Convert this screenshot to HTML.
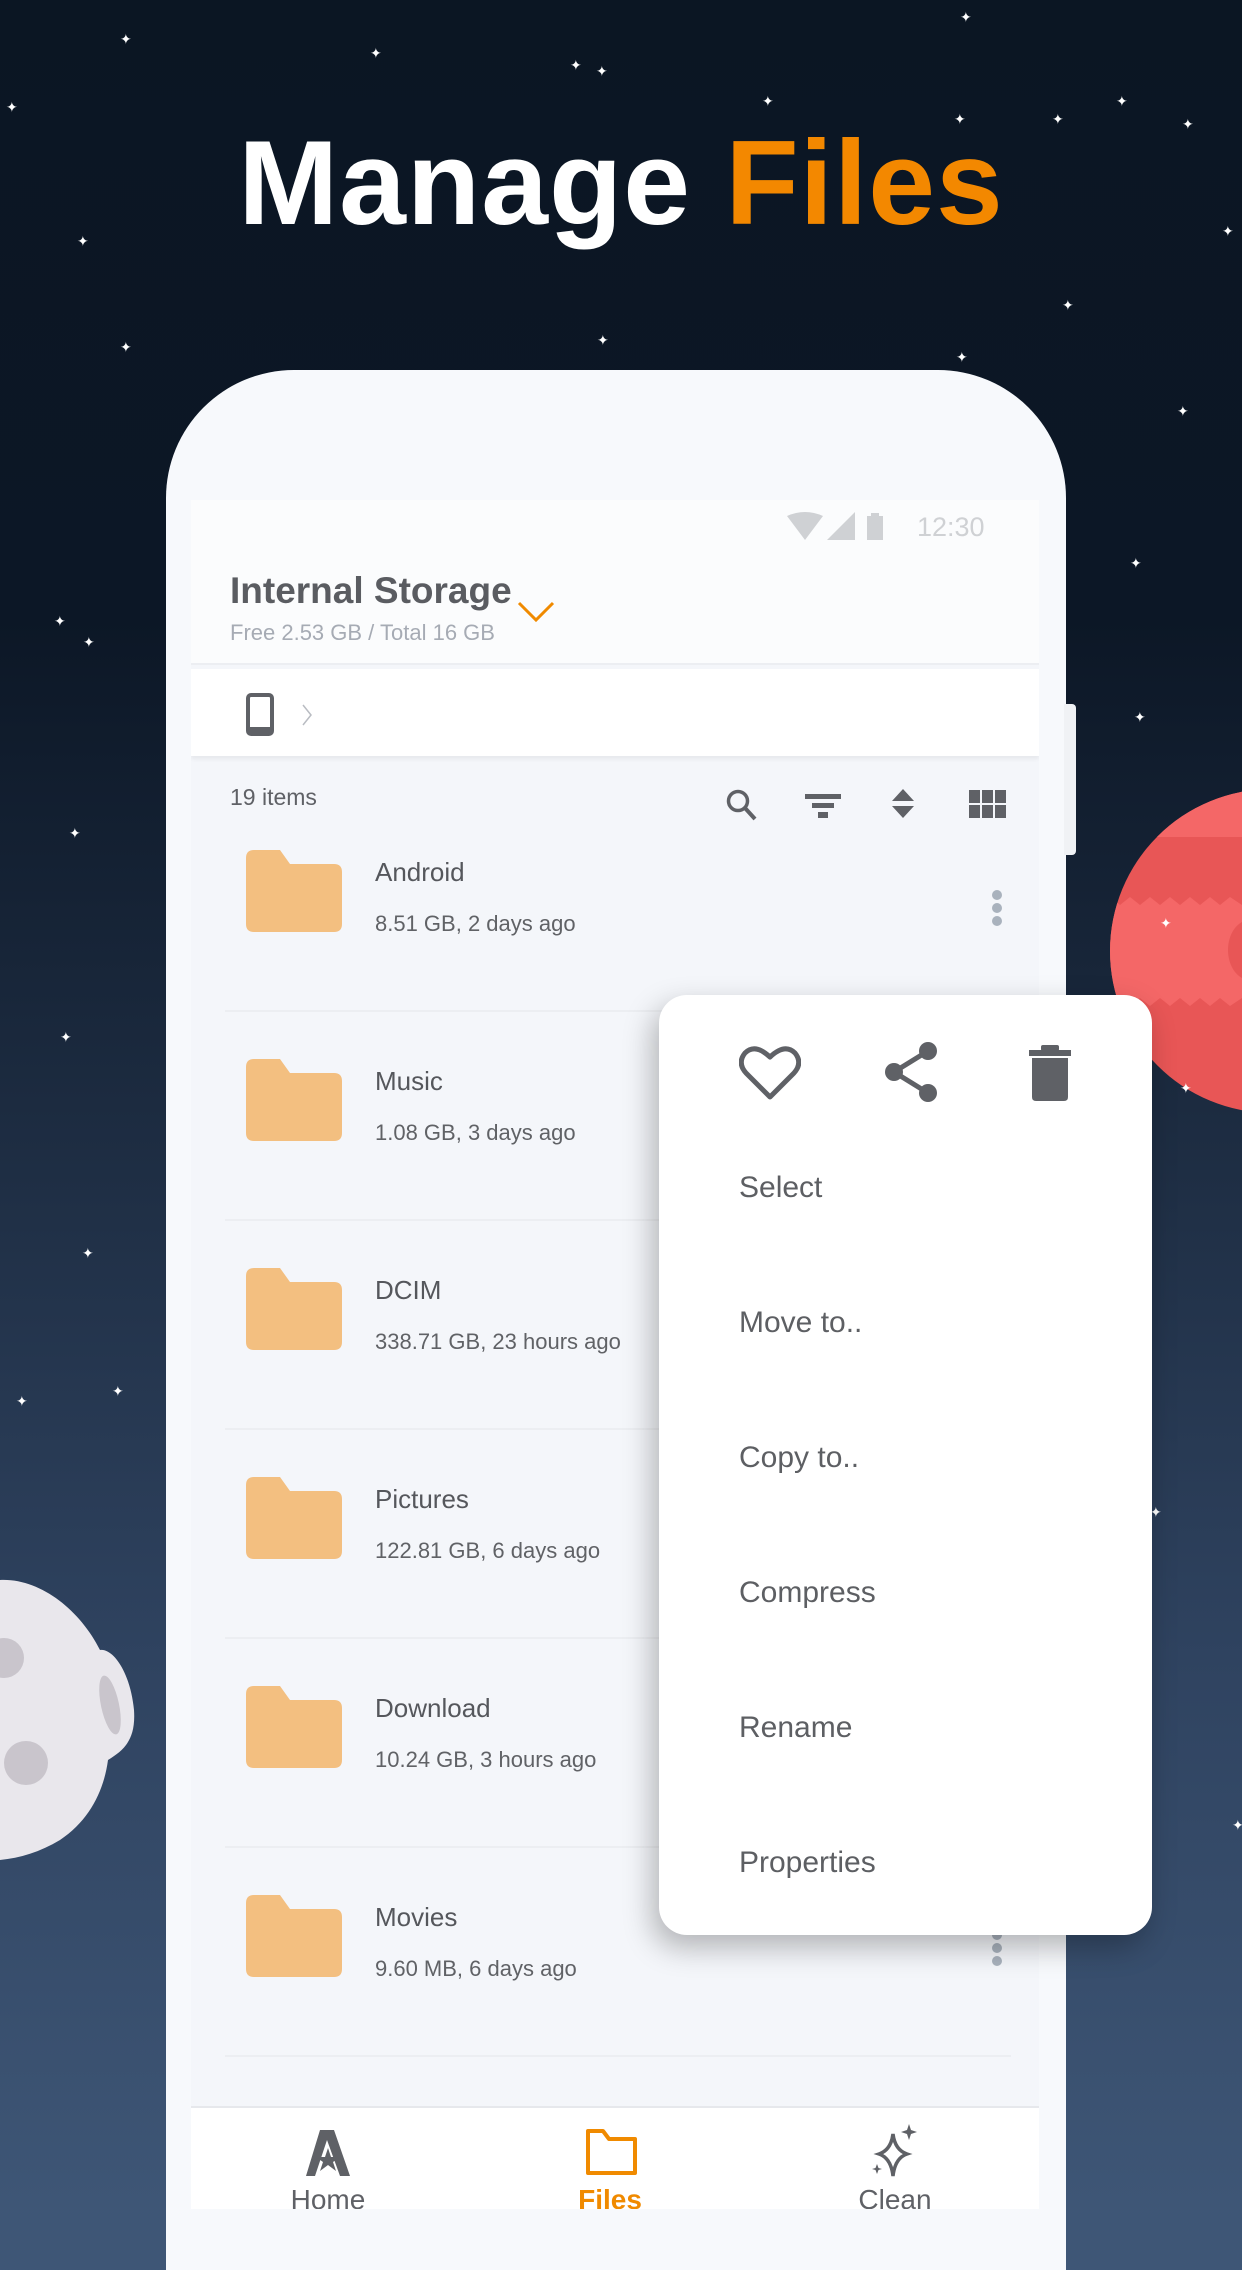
<!DOCTYPE html>
<html style="background:#3e5676"><head><meta charset="utf-8"><style>
*{margin:0;padding:0;box-sizing:border-box}
body{width:1242px;height:2209px;overflow:hidden;position:relative;font-family:"Liberation Sans",sans-serif;
background:linear-gradient(180deg,#0b1623 0%,#0c1726 28%,#1c2b40 50%,#2f4360 75%,#3e5676 100%);}
.star{position:absolute;color:#fff;font-size:14px;line-height:1}
.title{position:absolute;top:114px;left:0;width:1242px;text-align:center;font-weight:bold;font-size:120px;color:#fff;letter-spacing:1px}
.title span{color:#f38800}
.phone{position:absolute;left:166px;top:370px;width:900px;height:1900px;background:#f7f9fc;border-radius:128px 128px 0 0}
.btn{position:absolute;left:1064px;top:704px;width:12px;height:151px;background:#f0f2f5;border-radius:0 4px 4px 0}
.screen{position:absolute;left:191px;top:500px;width:848px;height:1709px;background:#f4f6fa;overflow:hidden}
.hdr{position:absolute;left:0;top:0;width:848px;height:165px;background:#fbfcfd;border-bottom:2px solid #eceef2}
.crumb{position:absolute;left:0;top:169px;width:848px;height:87px;background:#fff;box-shadow:0 3px 4px rgba(0,0,0,.06)}
.row{position:absolute;left:0;width:848px;height:209px}
.row .f{position:absolute;left:55px;top:47px}
.row .n{position:absolute;left:184px;top:54px;font-size:26px;color:#55575c}
.row .m{position:absolute;left:184px;top:108px;font-size:22px;color:#606266}
.row .sep{position:absolute;left:34px;right:28px;bottom:0;height:2px;background:#eceef2}
.dots{position:absolute;left:801px;width:10px}
.dots i{display:block;width:10px;height:10px;border-radius:5px;background:#a9b2bd;margin-bottom:3px}
.nav{position:absolute;left:0;top:1606px;width:848px;height:110px;background:#fff;border-top:2px solid #e6e8ec}
.nav div{position:absolute;top:76px;font-size:28px;width:160px;text-align:center;color:#5f6166}
.pop{position:absolute;left:659px;top:995px;width:493px;height:940px;background:#fff;border-radius:28px;box-shadow:-6px 12px 30px rgba(0,0,0,.28)}
.pop .it{position:absolute;left:80px;font-size:30px;color:#5d5f63}
</style></head><body>
<div class="star" style="left:120px;top:32px">✦</div>
<div class="star" style="left:6px;top:100px">✦</div>
<div class="star" style="left:370px;top:46px">✦</div>
<div class="star" style="left:570px;top:58px">✦</div>
<div class="star" style="left:596px;top:64px">✦</div>
<div class="star" style="left:762px;top:94px">✦</div>
<div class="star" style="left:960px;top:10px">✦</div>
<div class="star" style="left:1116px;top:94px">✦</div>
<div class="star" style="left:1052px;top:112px">✦</div>
<div class="star" style="left:954px;top:112px">✦</div>
<div class="star" style="left:1182px;top:117px">✦</div>
<div class="star" style="left:1222px;top:224px">✦</div>
<div class="star" style="left:77px;top:234px">✦</div>
<div class="star" style="left:1062px;top:298px">✦</div>
<div class="star" style="left:120px;top:340px">✦</div>
<div class="star" style="left:597px;top:333px">✦</div>
<div class="star" style="left:956px;top:350px">✦</div>
<div class="star" style="left:1177px;top:404px">✦</div>
<div class="star" style="left:54px;top:614px">✦</div>
<div class="star" style="left:83px;top:635px">✦</div>
<div class="star" style="left:1130px;top:556px">✦</div>
<div class="star" style="left:1134px;top:710px">✦</div>
<div class="star" style="left:69px;top:826px">✦</div>
<div class="star" style="left:60px;top:1030px">✦</div>
<div class="star" style="left:82px;top:1246px">✦</div>
<div class="star" style="left:16px;top:1394px">✦</div>
<div class="star" style="left:112px;top:1384px">✦</div>
<div class="star" style="left:1150px;top:1505px">✦</div>
<div class="star" style="left:1232px;top:1818px">✦</div>

<div class="title">Manage <span>Files</span></div>

<svg style="position:absolute;left:1100px;top:785px" width="142" height="335" viewBox="0 0 142 335">
<defs><clipPath id="pc"><circle cx="172" cy="166" r="162"/></clipPath></defs>
<g clip-path="url(#pc)">
<rect x="0" y="0" width="142" height="335" fill="#e85656"/>
<path d="M0 0H142V52H0Z" fill="#f46767"/>
<path d="M0 120 L10 112 L20 120 L30 112 L40 120 L50 112 L60 120 L70 112 L80 120 L90 112 L100 120 L110 112 L120 120 L130 112 L142 120 V213 L130 221 L120 213 L110 221 L100 213 L90 221 L80 213 L70 221 L60 213 L50 221 L40 213 L30 221 L20 213 L10 221 L0 213Z" fill="#f46767"/>
<ellipse cx="150" cy="165" rx="22" ry="30" fill="#e85656"/>
</g>
<text x="60" y="143" fill="#fff" font-size="14">✦</text>
<text x="80" y="308" fill="#fff" font-size="14">✦</text>
</svg>

<svg style="position:absolute;left:0;top:1570px" width="140" height="290" viewBox="0 0 140 290">
<path d="M0 10 C40 8 80 40 100 80 C112 78 130 100 134 140 C136 170 124 180 108 190 C104 220 90 250 60 270 C40 282 20 288 0 290Z" fill="#e9e7ec"/>
<circle cx="4" cy="88" r="20" fill="#c9c5cc"/>
<circle cx="26" cy="193" r="22" fill="#c9c5cc"/>
<ellipse cx="110" cy="135" rx="9" ry="30" fill="#c9c5cc" transform="rotate(-12 110 135)"/>
</svg>

<div class="phone"></div>
<div class="btn"></div>
<div class="screen">
 <div class="hdr">
  <svg style="position:absolute;left:596px;top:12px" width="100" height="30" viewBox="0 0 100 30">
   <path d="M0 4 Q18 -4 36 4 L18 28Z" fill="#cfd1d4"/>
   <path d="M40 28 L68 0 V28Z" fill="#cfd1d4"/>
   <rect x="80" y="4" width="16" height="24" fill="#cfd1d4"/><rect x="84" y="1" width="8" height="4" fill="#cfd1d4"/>
  </svg>
  <div style="position:absolute;left:726px;top:12px;font-size:27px;color:#cfd1d4">12:30</div>
  <div style="position:absolute;left:39px;top:70px;font-size:37px;font-weight:bold;color:#5a5c61">Internal Storage</div>
  <div style="position:absolute;left:39px;top:120px;font-size:22px;color:#a6abb4">Free 2.53 GB / Total 16 GB</div>
  <svg style="position:absolute;left:326px;top:101px" width="38" height="22"><path d="M2 2 L19 19 L36 2" stroke="#f08a00" stroke-width="3" fill="none"/></svg>
 </div>
 <div class="crumb">
  <svg style="position:absolute;left:55px;top:24px" width="28" height="43"><rect x="2" y="2" width="24" height="39" rx="3" fill="none" stroke="#5f6166" stroke-width="4"/><rect x="2" y="34" width="24" height="7" fill="#5f6166"/></svg>
  <svg style="position:absolute;left:110px;top:34px" width="12" height="24"><path d="M2 2 L10 12 L2 22" stroke="#b9bcc2" stroke-width="1.5" fill="none"/></svg>
 </div>
 <div style="position:absolute;left:39px;top:284px;font-size:23px;color:#5f6166">19 items</div>
 <svg style="position:absolute;left:534px;top:288px" width="34" height="34"><circle cx="13" cy="13" r="9.5" stroke="#5f6166" stroke-width="3.5" fill="none"/><path d="M20 20 L30 31" stroke="#5f6166" stroke-width="4"/></svg>
 <svg style="position:absolute;left:614px;top:292px" width="36" height="28"><rect x="0" y="2" width="36" height="5" fill="#5f6166"/><rect x="7" y="11" width="22" height="5" fill="#5f6166"/><rect x="13" y="20" width="10" height="6" fill="#5f6166"/></svg>
 <svg style="position:absolute;left:699px;top:287px" width="26" height="34"><path d="M2 14 L13 2 L24 14Z M2 19 L13 31 L24 19Z" fill="#5f6166"/></svg>
 <svg style="position:absolute;left:778px;top:290px" width="38" height="30"><g fill="#5f6166"><rect x="0" y="0" width="11" height="13"/><rect x="13" y="0" width="11" height="13"/><rect x="26" y="0" width="11" height="13"/><rect x="0" y="15" width="11" height="13"/><rect x="13" y="15" width="11" height="13"/><rect x="26" y="15" width="11" height="13"/></g></svg>

 <div class="row" style="top:303px"><svg class="f" width="96" height="82"><path d="M0 8 Q0 0 8 0 H34 L44 14 H88 Q96 14 96 22 V74 Q96 82 88 82 H8 Q0 82 0 74Z" fill="#f3bf80"/></svg><div class="n">Android</div><div class="m">8.51 GB, 2 days ago</div><div class="sep"></div></div>
 <div class="row" style="top:512px"><svg class="f" width="96" height="82"><path d="M0 8 Q0 0 8 0 H34 L44 14 H88 Q96 14 96 22 V74 Q96 82 88 82 H8 Q0 82 0 74Z" fill="#f3bf80"/></svg><div class="n">Music</div><div class="m">1.08 GB, 3 days ago</div><div class="sep"></div></div>
 <div class="row" style="top:721px"><svg class="f" width="96" height="82"><path d="M0 8 Q0 0 8 0 H34 L44 14 H88 Q96 14 96 22 V74 Q96 82 88 82 H8 Q0 82 0 74Z" fill="#f3bf80"/></svg><div class="n">DCIM</div><div class="m">338.71 GB, 23 hours ago</div><div class="sep"></div></div>
 <div class="row" style="top:930px"><svg class="f" width="96" height="82"><path d="M0 8 Q0 0 8 0 H34 L44 14 H88 Q96 14 96 22 V74 Q96 82 88 82 H8 Q0 82 0 74Z" fill="#f3bf80"/></svg><div class="n">Pictures</div><div class="m">122.81 GB, 6 days ago</div><div class="sep"></div></div>
 <div class="row" style="top:1139px"><svg class="f" width="96" height="82"><path d="M0 8 Q0 0 8 0 H34 L44 14 H88 Q96 14 96 22 V74 Q96 82 88 82 H8 Q0 82 0 74Z" fill="#f3bf80"/></svg><div class="n">Download</div><div class="m">10.24 GB, 3 hours ago</div><div class="sep"></div></div>
 <div class="row" style="top:1348px"><svg class="f" width="96" height="82"><path d="M0 8 Q0 0 8 0 H34 L44 14 H88 Q96 14 96 22 V74 Q96 82 88 82 H8 Q0 82 0 74Z" fill="#f3bf80"/></svg><div class="n">Movies</div><div class="m">9.60 MB, 6 days ago</div><div class="sep"></div></div>
 <div class="dots" style="top:390px"><i></i><i></i><i></i></div>
 <div class="dots" style="top:1430px"><i></i><i></i><i></i></div>

 <div class="nav">
  <svg style="position:absolute;left:113px;top:20px" width="48" height="50" viewBox="0 0 48 50"><path d="M16 2 H30 L46 48 H36 L23 12 L11 48 H2Z" fill="#5f6166"/><path d="M24 20 L27 29 H36 L29 34 L32 43 L24 37 L16 43 L19 34 L12 29 H21Z" fill="#5f6166"/></svg>
  <svg style="position:absolute;left:394px;top:20px" width="54" height="48"><path d="M3 3 H18 L24 11 H50 V45 H3Z" fill="none" stroke="#f08a00" stroke-width="4" stroke-linejoin="round"/></svg>
  <svg style="position:absolute;left:680px;top:16px" width="50" height="54" viewBox="0 0 50 54"><path d="M22 10 Q24 26 36 30 Q24 34 22 52 Q20 34 8 30 Q20 26 22 10Z" fill="none" stroke="#5f6166" stroke-width="3.5"/><path d="M38 0 L40 6 L46 8 L40 10 L38 16 L36 10 L30 8 L36 6Z" fill="#5f6166"/><path d="M6 40 L7.5 44 L11 45 L7.5 46 L6 50 L4.5 46 L1 45 L4.5 44Z" fill="#5f6166"/></svg>
  <div style="left:57px">Home</div>
  <div style="left:339px;color:#f08a00;font-weight:bold">Files</div>
  <div style="left:624px">Clean</div>
 </div>
</div>

<div class="pop">
 <svg style="position:absolute;left:80px;top:50px" width="62" height="56" viewBox="0 0 62 56"><path d="M31 52 L7 28 Q-2 18 6 8 Q16 -2 31 12 Q46 -2 56 8 Q64 18 55 28Z" fill="none" stroke="#5f6166" stroke-width="5" stroke-linejoin="round"/></svg>
 <svg style="position:absolute;left:223px;top:46px" width="58" height="62" viewBox="0 0 58 62"><path d="M46 10 L12 31 L46 52" stroke="#5f6166" stroke-width="5" fill="none"/><circle cx="46" cy="10" r="9" fill="#5f6166"/><circle cx="12" cy="31" r="9" fill="#5f6166"/><circle cx="46" cy="52" r="9" fill="#5f6166"/></svg>
 <svg style="position:absolute;left:370px;top:50px" width="42" height="56"><rect x="0" y="5" width="42" height="6" fill="#5f6166"/><rect x="12" y="0" width="18" height="6" rx="2" fill="#5f6166"/><path d="M3 13 H39 V52 Q39 56 35 56 H7 Q3 56 3 52Z" fill="#5f6166"/></svg>
 <div class="it" style="top:176px">Select</div>
 <div class="it" style="top:311px">Move to..</div>
 <div class="it" style="top:446px">Copy to..</div>
 <div class="it" style="top:581px">Compress</div>
 <div class="it" style="top:716px">Rename</div>
 <div class="it" style="top:851px">Properties</div>
</div>
</body></html>
